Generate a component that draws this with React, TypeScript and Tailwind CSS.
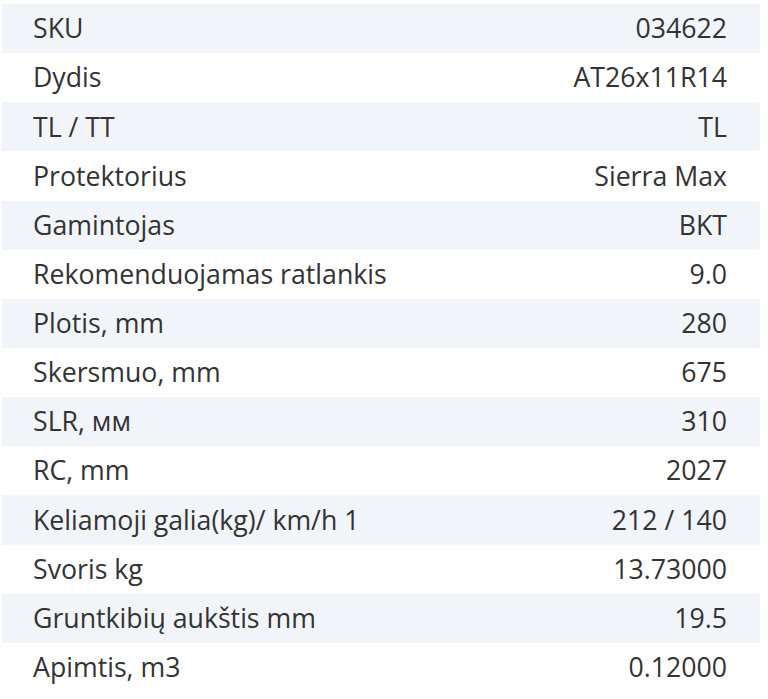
import React from "react";

const rows: [string, string][] = [
  ["SKU", "034622"],
  ["Dydis", "AT26x11R14"],
  ["TL / TT", "TL"],
  ["Protektorius", "Sierra Max"],
  ["Gamintojas", "BKT"],
  ["Rekomenduojamas ratlankis", "9.0"],
  ["Plotis, mm", "280"],
  ["Skersmuo, mm", "675"],
  ["SLR, мм", "310"],
  ["RC, mm", "2027"],
  ["Keliamoji galia(kg)/ km/h 1", "212 / 140"],
  ["Svoris kg", "13.73000"],
  ["Gruntkibių aukštis mm", "19.5"],
  ["Apimtis, m3", "0.12000"],
];

export default function App() {
  return (
    <div className="w-[768px] h-[699px] bg-white pt-[4px] pl-[2px]" style={{ fontFamily: '"Open Sans", sans-serif' }}>
      <div className="w-[758px] flex flex-col">
        {rows.map(([k, v], i) => (
          <div
            key={k}
            className={`h-[49.15px] flex items-center justify-between pl-[31px] pr-[33px] text-[26.7px] leading-none text-[#333333] ${i % 2 === 0 ? "bg-[#f1f5fa]" : "bg-white"}`}
          >
            <span>{k}</span>
            <span>{v}</span>
          </div>
        ))}
      </div>
    </div>
  );
}
